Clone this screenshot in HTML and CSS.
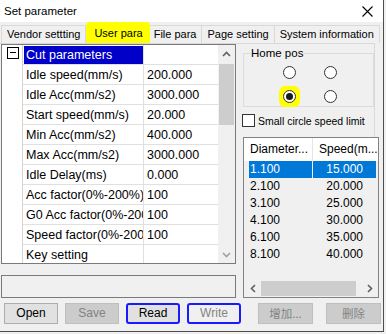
FILE: index.html
```html
<!DOCTYPE html>
<html lang="en">
<head>
    <meta charset="UTF-8">
    <title>Set parameter</title>
    <link rel="stylesheet" href="styles.css">
</head>
<body>
    <div class="window">
        <!-- Title bar -->
        <div class="titlebar">
            <span class="title">Set parameter</span>
            <svg class="close" width="11" height="11" viewBox="0 0 11 11">
                <path d="M0.5 0.5 L10.5 10.5 M10.5 0.5 L0.5 10.5" stroke="#000" stroke-width="1.1" fill="none"/>
            </svg>
        </div>

        <!-- Tabs -->
        <div class="tabs">
            <div class="tab">Vendor settting</div>
            <div class="tab active">User para</div>
            <div class="tab">File para</div>
            <div class="tab">Page setting</div>
            <div class="tab">System information</div>
        </div>

        <div class="tabpage">
            <div class="left">
                <!-- Property grid -->
                <div class="propgrid">
                    <div class="pg-rows">
                        <div class="pg-row category">
                            <div class="gutter"><span class="collapse"></span></div>
                            <div class="name"><span>Cut parameters</span></div>
                            <div class="value"></div>
                        </div>
                        <div class="pg-row">
                            <div class="gutter"></div>
                            <div class="name"><span>Idle speed(mm/s)</span></div>
                            <div class="value"><span>200.000</span></div>
                        </div>
                        <div class="pg-row">
                            <div class="gutter"></div>
                            <div class="name"><span>Idle Acc(mm/s2)</span></div>
                            <div class="value"><span>3000.000</span></div>
                        </div>
                        <div class="pg-row">
                            <div class="gutter"></div>
                            <div class="name"><span>Start speed(mm/s)</span></div>
                            <div class="value"><span>20.000</span></div>
                        </div>
                        <div class="pg-row">
                            <div class="gutter"></div>
                            <div class="name"><span>Min Acc(mm/s2)</span></div>
                            <div class="value"><span>400.000</span></div>
                        </div>
                        <div class="pg-row">
                            <div class="gutter"></div>
                            <div class="name"><span>Max Acc(mm/s2)</span></div>
                            <div class="value"><span>3000.000</span></div>
                        </div>
                        <div class="pg-row">
                            <div class="gutter"></div>
                            <div class="name"><span>Idle Delay(ms)</span></div>
                            <div class="value"><span>0.000</span></div>
                        </div>
                        <div class="pg-row">
                            <div class="gutter"></div>
                            <div class="name"><span>Acc factor(0%-200%)</span></div>
                            <div class="value"><span>100</span></div>
                        </div>
                        <div class="pg-row">
                            <div class="gutter"></div>
                            <div class="name"><span>G0 Acc factor(0%-200%)</span></div>
                            <div class="value"><span>100</span></div>
                        </div>
                        <div class="pg-row">
                            <div class="gutter"></div>
                            <div class="name"><span>Speed factor(0%-200%)</span></div>
                            <div class="value"><span>100</span></div>
                        </div>
                        <div class="pg-row">
                            <div class="gutter"></div>
                            <div class="name"><span>Key setting</span></div>
                            <div class="value"></div>
                        </div>
                    </div>
                    <div class="vscroll">
                        <div class="sb-arrow">
                            <svg width="9" height="6" viewBox="0 0 9 6"><path d="M1 5 L4.5 1.5 L8 5" stroke="#606060" stroke-width="1.6" fill="none"/></svg>
                        </div>
                        <div class="vthumb"></div>
                        <div class="sb-fill"></div>
                        <div class="sb-arrow">
                            <svg width="9" height="6" viewBox="0 0 9 6"><path d="M1 1 L4.5 4.5 L8 1" stroke="#a0a0a0" stroke-width="1.6" fill="none"/></svg>
                        </div>
                    </div>
                </div>

                <div class="status"></div>
            </div>

            <div class="right">
                <fieldset class="group">
                    <legend>Home pos</legend>
                    <div class="radios">
                        <span class="radio"></span>
                        <span class="radio"></span>
                        <span class="mark"><span class="radio checked"></span></span>
                        <span class="radio"></span>
                    </div>
                </fieldset>

                <label class="check"><span class="box"></span>Small circle speed limit</label>

                <!-- List view -->
                <div class="listview">
                    <div class="lv-head">
                        <div>Diameter...</div>
                        <div>Speed(m...</div>
                    </div>
                    <div class="lv-row selected"><div>1.100</div><div>15.000</div></div>
                    <div class="lv-row"><div>2.100</div><div>20.000</div></div>
                    <div class="lv-row"><div>3.100</div><div>25.000</div></div>
                    <div class="lv-row"><div>4.100</div><div>30.000</div></div>
                    <div class="lv-row"><div>6.100</div><div>35.000</div></div>
                    <div class="lv-row"><div>8.100</div><div>40.000</div></div>
                    <div class="hscroll">
                        <div class="sb-arrow">
                            <svg width="6" height="9" viewBox="0 0 6 9"><path d="M5 1 L1.5 4.5 L5 8" stroke="#606060" stroke-width="1.6" fill="none"/></svg>
                        </div>
                        <div class="hthumb"></div>
                        <div class="sb-fill"></div>
                        <div class="sb-arrow">
                            <svg width="6" height="9" viewBox="0 0 6 9"><path d="M1 1 L4.5 4.5 L1 8" stroke="#606060" stroke-width="1.6" fill="none"/></svg>
                        </div>
                    </div>
                </div>
            </div>
        </div>

        <!-- Buttons -->
        <div class="buttons">
            <div class="btn-group">
                <div class="btn">Open</div>
                <div class="btn disabled">Save</div>
                <div class="btn marked">Read</div>
                <div class="btn disabled marked light">Write</div>
            </div>
            <div class="btn-group cjk">
                <div class="btn disabled wide">增加...</div>
                <div class="btn disabled wide">删除</div>
            </div>
        </div>
    </div>
</body>
</html>
```

FILE: styles.css
```css
* {
    box-sizing: border-box;
}

body {
    margin: 0;
    background: #f0f0f0;
    font-family: "Liberation Sans", Arial, sans-serif;
    font-size: 11px;
    color: #000;
}

.window {
    width: 384px;
    height: 332px;
    border-right: 1px solid #4d4d4d;
    border-bottom: 1px solid #4d4d4d;
    display: flex;
    flex-direction: column;
    background: #f0f0f0;
    overflow: hidden;
}

/* Title bar */
.titlebar {
    flex: none;
    height: 22px;
    background: #fff;
    display: flex;
    align-items: center;
    justify-content: space-between;
    padding: 0 10px 0 4px;
}

.title {
    font-size: 11.5px;
}

/* Tabs */
.tabs {
    flex: none;
    height: 21px;
    display: flex;
    align-items: flex-end;
    padding-left: 2px;
}

.tab {
    height: 18px;
    line-height: 17px;
    border: 1px solid #d9d9d9;
    border-bottom: none;
    padding: 0 5px;
    margin-left: -1px;
    background: #f0f0f0;
    white-space: nowrap;
}

.tab.active {
    height: 21px;
    line-height: 20px;
    padding: 0 6px 0 7px;
    margin: 0 -1px 0 0;
    background: #ffff00;
    border-color: #ffff00;
    border-radius: 4px 4px 0 0;
    position: relative;
    z-index: 1;
}

/* Tab page */
.tabpage {
    flex: none;
    width: 375px;
    height: 256px;
    border-top: 1px solid #d9d9d9;
    border-right: 1px solid #d9d9d9;
    display: grid;
    grid-template-columns: 243px 1fr;
}

.left {
    padding-left: 1px;
}

/* Property grid */
.propgrid {
    width: 235px;
    height: 220px;
    border: 1px solid #7a7a7a;
    background: #fff;
    display: flex;
    overflow: hidden;
}

.pg-rows {
    flex: 1;
    font-size: 12.5px;
}

.pg-row {
    display: grid;
    grid-template-columns: 21px 121px 1fr;
    height: 20px;
}

.gutter {
    border-right: 1px solid #d4d4d4;
    padding: 2px 0 0 5px;
}

.collapse {
    display: block;
    width: 12px;
    height: 12px;
    border: 1px solid #000;
    position: relative;
}

.collapse::after {
    content: "";
    position: absolute;
    left: 2px;
    right: 2px;
    top: 4px;
    height: 1px;
    background: #000;
}

.name,
.value {
    border-bottom: 1px solid #e0e0e0;
    padding: 1px 0 1px 1px;
    white-space: nowrap;
    overflow: hidden;
    min-width: 0;
}

.name {
    border-right: 1px solid #e0e0e0;
}

.name span,
.value span {
    display: block;
    height: 18px;
    line-height: 18px;
    padding-left: 2px;
    overflow: hidden;
}

.category .name span {
    background: #0000c8;
    color: #fff;
}

.vscroll {
    width: 17px;
    background: #f0f0f0;
    display: flex;
    flex-direction: column;
}

.sb-arrow {
    flex: none;
    width: 17px;
    height: 17px;
    display: flex;
    align-items: center;
    justify-content: center;
}

.vthumb {
    height: 61px;
    margin: 2px 1px 0;
    background: #cdcdcd;
}

.sb-fill {
    flex: 1;
}

.status {
    width: 235px;
    height: 23px;
    margin-top: 11px;
    border: 1px solid #7a7a7a;
}

/* Right column */
.right {
    padding-top: 3px;
}

.group {
    width: 131px;
    margin: 0;
    padding: 6px 0 3px 0;
    border: 1px solid #dcdcdc;
}

.group legend {
    margin-left: 6px;
    padding: 0 1px;
    line-height: 13px;
    font-size: 11.5px;
}

.radios {
    display: grid;
    grid-template-columns: 13px 13px;
    column-gap: 28px;
    row-gap: 11px;
    padding-left: 39px;
}

.radio {
    display: block;
    width: 13px;
    height: 13px;
    border: 1px solid #333;
    border-radius: 50%;
    background: #fff;
    position: relative;
}

.radio.checked::after {
    content: "";
    position: absolute;
    left: 2px;
    top: 2px;
    width: 7px;
    height: 7px;
    border-radius: 50%;
    background: #1a1a1a;
}

.mark {
    display: block;
    margin: -4px;
    padding: 4px;
    background: #ffff00;
    border-radius: 6px;
}

.check {
    display: flex;
    align-items: center;
    height: 13px;
    margin: 7px 0 0 -1px;
    white-space: nowrap;
    font-size: 10.5px;
}

.check .box {
    width: 13px;
    height: 13px;
    border: 1px solid #333;
    background: #fff;
    margin-right: 3px;
}

/* List view */
.listview {
    width: 136px;
    height: 161px;
    margin-top: 10px;
    border: 1px solid #828282;
    background: #f0f0f0;
    display: flex;
    flex-direction: column;
    font-size: 12px;
}

.lv-head {
    display: grid;
    grid-template-columns: 69px 1fr;
    height: 23px;
    line-height: 23px;
    background: #fff;
}

.lv-head div {
    padding-left: 6px;
    white-space: nowrap;
}

.lv-head div:first-child {
    border-right: 1px solid #e5e5e5;
}

.lv-row {
    display: grid;
    grid-template-columns: 63px 1fr;
    column-gap: 1px;
    height: 17px;
    line-height: 17px;
    margin: 0 2px 0 5px;
}

.lv-row div:first-child {
    padding-left: 1px;
}

.lv-row div:last-child {
    text-align: right;
    padding-right: 13px;
}

.lv-row.selected div {
    background: #0078d7;
    color: #fff;
}

.hscroll {
    margin-top: auto;
    height: 17px;
    display: flex;
}

.hthumb {
    width: 95px;
    margin: 1px 0;
    background: #cdcdcd;
}

/* Buttons */
.buttons {
    flex: none;
    display: flex;
    padding: 4px 0 0 4px;
    font-size: 12px;
}

.btn-group {
    display: flex;
    gap: 7px;
}

.btn-group.cjk {
    margin-left: 17px;
    gap: 13px;
    font-family: "Noto Sans CJK SC", sans-serif;
    font-size: 11.5px;
}

.btn {
    width: 54px;
    height: 21px;
    line-height: 19px;
    text-align: center;
    border: 1px solid #adadad;
    background: #e1e1e1;
}

.btn.wide {
    width: 55px;
}

.btn.disabled {
    background: #cccccc;
    border-color: #bfbfbf;
    color: #838383;
}

.btn.light {
    background: #f0f0f0;
}

.btn.marked {
    border: 2px solid #1a1aff;
    border-radius: 3px;
    line-height: 17px;
}
```
